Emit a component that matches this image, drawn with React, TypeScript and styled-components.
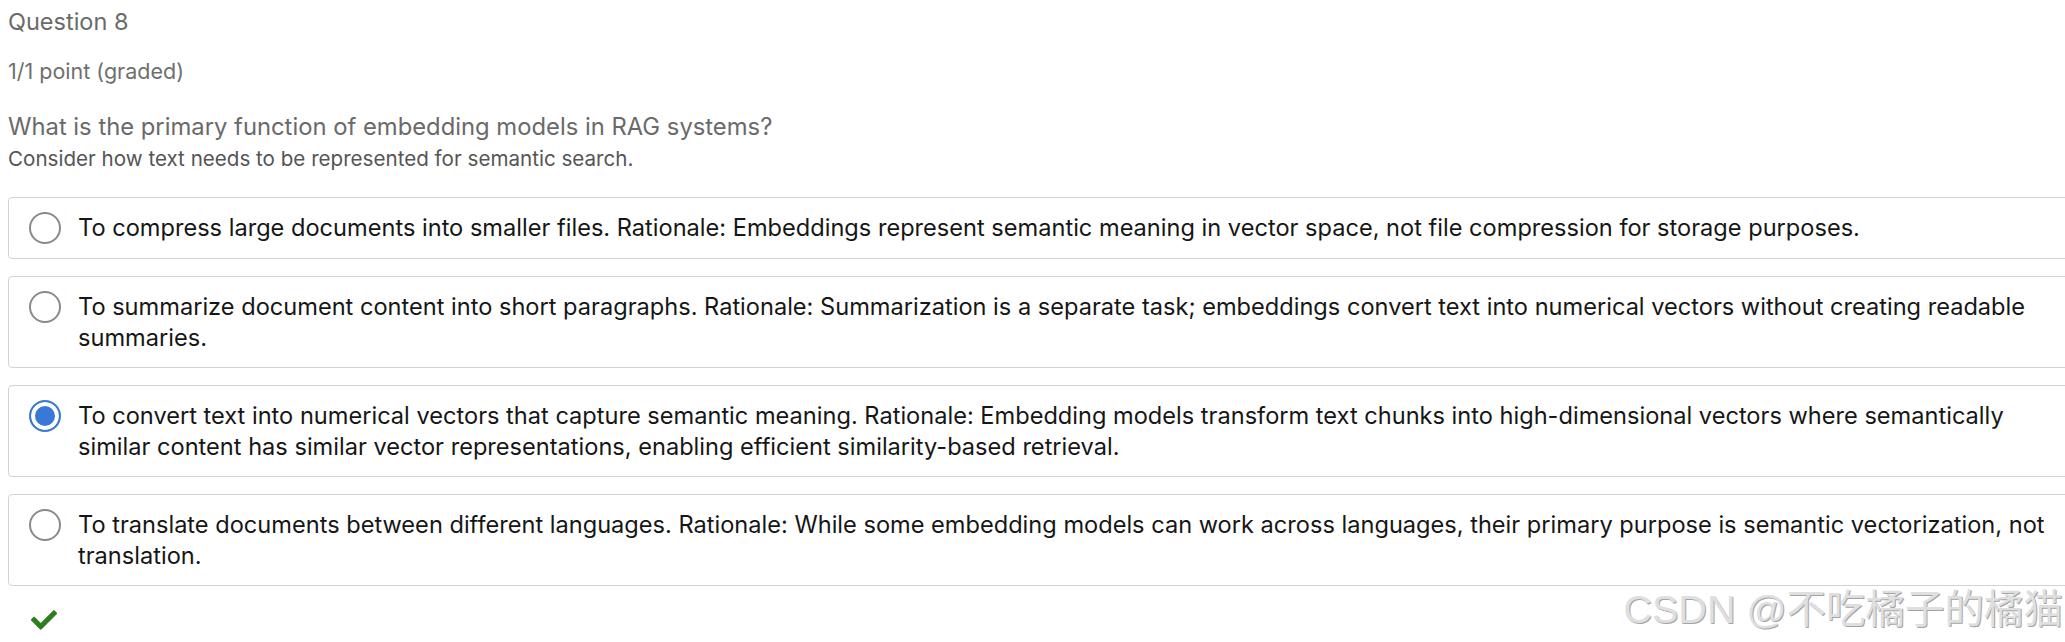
import React, { useState } from 'react';
import styled, { createGlobalStyle } from 'styled-components';
import { FaCheck } from 'react-icons/fa';

const GlobalStyle = createGlobalStyle`
  html, body {
    margin: 0;
    padding: 0;
    background: #ffffff;
    overflow: hidden;
  }
  body {
    font-family: Inter, "Noto Sans", "Liberation Sans", sans-serif;
  }
`;

const options: Array<string> = [
  'To compress large documents into smaller files. Rationale: Embeddings represent semantic meaning in vector space, not file compression for storage purposes.',
  'To summarize document content into short paragraphs. Rationale: Summarization is a separate task; embeddings convert text into numerical vectors without creating readable summaries.',
  'To convert text into numerical vectors that capture semantic meaning. Rationale: Embedding models transform text chunks into high-dimensional vectors where semantically similar content has similar vector representations, enabling efficient similarity-based retrieval.',
  'To translate documents between different languages. Rationale: While some embedding models can work across languages, their primary purpose is semantic vectorization, not translation.',
];

export default function App() {
  const [selected, setSelected] = useState<number>(2);

  return (
    <Page>
      <GlobalStyle />
      <Title>Question 8</Title>
      <Points>1/1 point (graded)</Points>
      <Prompt>What is the primary function of embedding models in RAG systems?</Prompt>
      <Hint>Consider how text needs to be represented for semantic search.</Hint>
      <OptionList>
        {options.map((text, i) => (
          <OptionBox key={i} onClick={() => setSelected(i)}>
            <Radio checked={i === selected} />
            <OptionText>{text}</OptionText>
          </OptionBox>
        ))}
      </OptionList>
      <Result>
        <FaCheck />
      </Result>
      <Watermark>CSDN @不吃橘子的橘猫</Watermark>
    </Page>
  );
}

const Page = styled.div`
  position: relative;
  width: 2065px;
  height: 642px;
  padding: 7px 0 0 8px;
  box-sizing: border-box;
`;

const Title = styled.div`
  font-size: 23.5px;
  line-height: 30px;
  color: #6a6a6a;
`;

const Points = styled.div`
  margin-top: 21px;
  font-size: 21.5px;
  line-height: 26px;
  color: #6f6f6f;
`;

const Prompt = styled.div`
  margin-top: 28px;
  font-size: 23.8px;
  line-height: 30px;
  color: #6a6a6a;
`;

const Hint = styled.div`
  margin-top: 4px;
  font-size: 20.6px;
  line-height: 26px;
  color: #555555;
`;

const OptionList = styled.div`
  margin-top: 25px;
  width: 2080px;
  display: flex;
  flex-direction: column;
  gap: 17px;
`;

const OptionBox = styled.div`
  display: flex;
  align-items: flex-start;
  gap: 17px;
  padding: 14px 20px 14px 20px;
  border: 1px solid #d2d2d2;
  border-radius: 4px;
  cursor: pointer;
`;

const Radio = styled.span<{ checked: boolean }>`
  flex: none;
  width: 32px;
  height: 32px;
  box-sizing: border-box;
  border-radius: 50%;
  border: 2px solid ${(props) => (props.checked ? '#3a78d8' : '#8a8a8a')};
  background: ${(props) => (props.checked ? '#3a78d8' : '#ffffff')};
  box-shadow: ${(props) => (props.checked ? 'inset 0 0 0 4px #ffffff' : 'none')};
`;

const OptionText = styled.div`
  font-size: 23.6px;
  line-height: 31px;
  color: #161616;
`;

const Result = styled.div`
  margin: 21px 0 0 23px;
  font-size: 26px;
  line-height: 28px;
  color: #2f7d1f;
`;

const Watermark = styled.div`
  position: absolute;
  right: 2px;
  bottom: 8px;
  font-family: "Liberation Sans", "Noto Sans CJK SC", sans-serif;
  font-size: 39.5px;
  color: #dcdcdc;
  text-shadow: 1px 1px 0 #9a9a9a;
  opacity: 0.9;
`;
